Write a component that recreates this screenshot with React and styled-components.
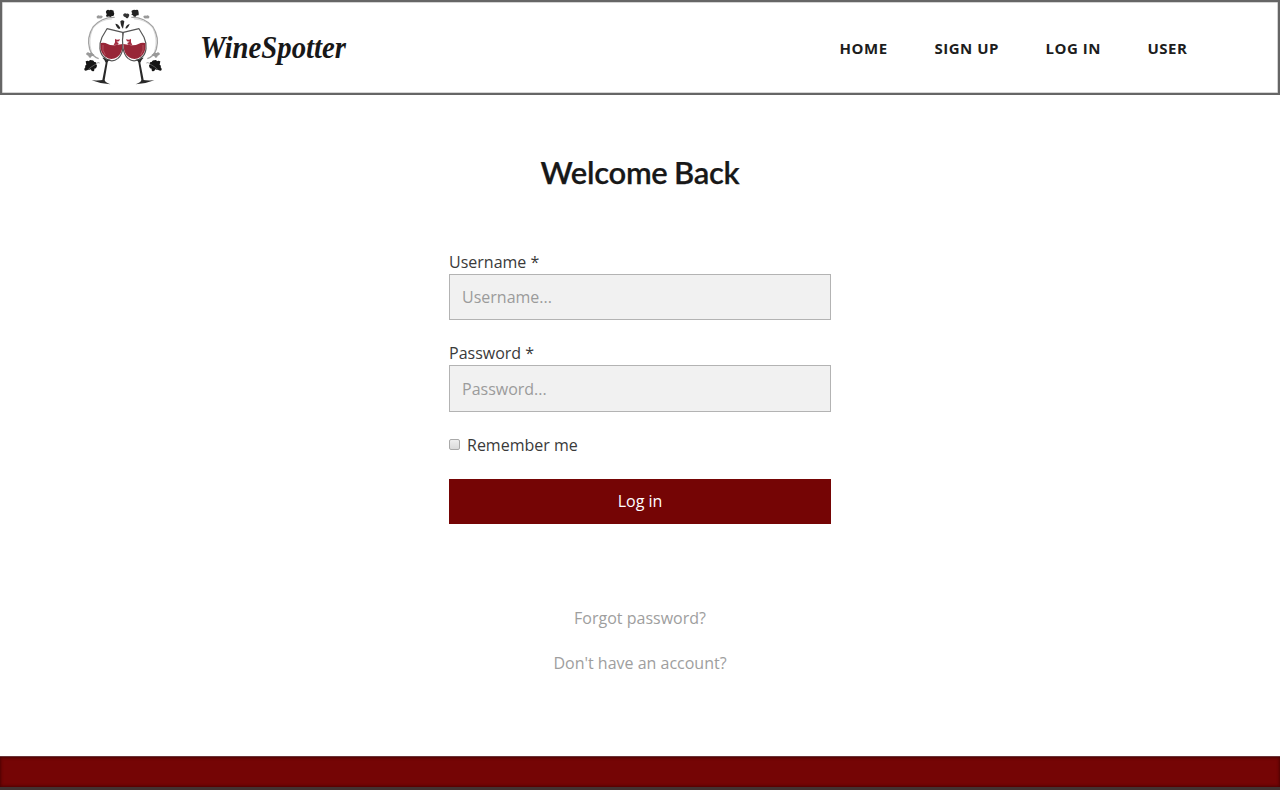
import React from "react";
import styled, { createGlobalStyle } from "styled-components";

const GlobalStyle = createGlobalStyle`
  * { box-sizing: border-box; }
  body {
    margin: 0;
    background: #fff;
    color: #3a3a3a;
    font-family: "Open Sans", sans-serif;
    font-size: 16px;
    overflow: hidden;
  }
`;

const Page = styled.div`
  display: flex;
  flex-direction: column;
  height: 790px;
`;

const Header = styled.header`
  display: flex;
  align-items: center;
  flex: none;
  height: 95px;
  padding: 0 89.5px 0 82px;
  border: 2px solid #666;
  box-shadow: inset 0 0 0 0.5px #aaa;
`;

const LogoMark = styled.svg`
  width: 78px;
  height: 78px;
  margin-top: -2px;
`;

const Brand = styled.svg`
  width: 160px;
  height: 60px;
  margin-left: 33px;
  overflow: visible;
  fill: #181818;
  font: italic bold 32px "Liberation Serif", serif;
`;

const Nav = styled.nav`
  display: flex;
  gap: 46px;
  margin: 1px 0 0 auto;
`;

const NavLink = styled.a`
  width: ${(p) => p.$width}px;
  color: #1d1d1d;
  font-size: 15px;
  font-weight: 700;
  line-height: 24px;
  letter-spacing: ${(p) => p.$tracking}px;
  white-space: nowrap;
`;

const Main = styled.main`
  display: flex;
  flex: 1;
  flex-direction: column;
  align-items: center;
`;

const Title = styled.h1`
  margin: 57px 0 0;
  color: #181818;
  font: 600 31px/40px Lato, sans-serif;
  letter-spacing: -0.3px;
  word-spacing: -1px;
  -webkit-text-stroke: 0.25px #181818;
`;

const Form = styled.form`
  display: flex;
  flex-direction: column;
  width: 382px;
  margin-top: 58px;
`;

const Field = styled.label`
  display: flex;
  flex-direction: column;
  height: ${(p) => p.$height}px;
  font-size: 16px;
  line-height: 24px;
`;

const Input = styled.input`
  width: 100%;
  height: ${(p) => p.$height}px;
  padding: 0 12px;
  border: 1px solid #b3b3b3;
  border-radius: 0;
  outline: 0;
  background: #f1f1f1;
  font: 16px "Open Sans", sans-serif;
  &::placeholder { color: #9b9b9b; opacity: 1; }
`;

const Remember = styled.label`
  display: flex;
  align-items: center;
  gap: 7px;
  height: 24px;
  font-size: 16px;
`;

const Checkbox = styled.input`
  appearance: none;
  width: 11px;
  height: 11px;
  margin: -2px 0 0;
  border: 1px solid #a9a9a9;
  border-radius: 2px;
  background: linear-gradient(#eee, #dadada);
`;

const Submit = styled.button`
  height: 45px;
  margin-top: 22px;
  padding: 0;
  border: 0;
  background: #750505;
  color: #fff;
  font: 16px/45px "Open Sans", sans-serif;
`;

const Links = styled.div`
  display: flex;
  flex-direction: column;
  align-items: center;
  gap: 21px;
  margin-top: 82px;
`;

const HelpLink = styled.a`
  color: #9e9e9e;
  font-size: 16px;
  line-height: 24px;
`;

const Footer = styled.footer`
  flex: none;
  height: 34px;
  border-top: 1px solid #6b3438;
  border-bottom: 3px solid #433332;
  background: #750505;
  box-shadow: inset 0 0 3px 1px #4d0202;
`;

function Glass() {
  return (
    <g>
      <path d="M96 83 L143 94 C149 126 145 158 129 172 Q111 187 92 172 C70 158 72 129 81 109Z" fill="#fff" stroke="#555" strokeWidth="3.5" strokeLinejoin="round" />
      <path d="M77 126 Q88 123 98 129 T124 132 L143 129 Q143 157 126 169 Q108 180 91 167 Q74 156 77 126Z" fill="#972637" />
      <path d="M84 132 Q80 148 91 162" fill="none" stroke="#bd5c69" strokeWidth="2.5" />
      <path d="M120 113q4 5 15 2l-3 6-8 1 7 4-2 5-13 1 4-8Z" fill="#a42c40" />
      <path d="M82 170 Q91 178 92 185 L82 237 Q75 239 50 238 Q77 249 106 250 Q90 244 89 237 L98 184 Q99 178 108 175 Q95 178 87 170Z" fill="#292929" />
    </g>
  );
}

function Vine() {
  return (
    <g>
      <path d="M119 49 Q80 48 55 77 Q34 110 44 144 Q51 166 71 173" fill="none" stroke="#a2a2a2" strokeWidth="4" />
      <path d="M111 54 Q74 55 53 83 Q39 119 49 151" fill="none" stroke="#c8c8c8" strokeWidth="2" />
      <path d="M65 46 q6-5 9-2 q10-2 9 4 q-3 6-11 4 q-8 3-7-6Z" fill="#999" />
      <path d="M34 157 q5-6 9-1 q10-3 9 2 q9 2 4 6 q-8 0-9 6 q-6 2-7-6 q-8-1-6-7Z" fill="#999" />
      <path d="M32 181 q7-3 10 0 q2-6 8-3 q6-1 8 5 q8-1 5 6 q5 5 2 9 q-1 5-7 5 q1 8-5 8 q-5-1-6-6 q-5 3-10 2 q-5 5-9 0 q-1-4 3-8 q-3-6 3-8Z" fill="#151515" />
      <path d="M38 207q10-10 27-19q3-6 9-2" fill="none" stroke="#777" strokeWidth="2" />
    </g>
  );
}

function Logo() {
  return (
    <LogoMark viewBox="27 21 234 234" aria-hidden="true">
      <Vine />
      <g transform="translate(288 0) scale(-1 1)"><Vine /></g>
      <path d="M94 29q5-5 9-1 6-4 8 0 7-1 5 5 3 5 1 8 0 5-6 4-6 5-9 1-7 4-9-2 4-3 1-7-3-5 0-8Z" fill="#191919" />
      <path d="M170 29q7-5 11-2 9-3 9 3 2 7 1 13-7-1-9 4-7 2-8-4-8-1-2-6-4-4-2-8Z" fill="#222" />
      <path d="M145 40q5-6 9-2 8-2 9 4-1 5-4 9-5 3-8-3-8-1-6-8Z" fill="#333" />
      <path d="M121 68q9 0 15 13l-3 3q-8-3-12-16ZM136 61q6-6 12 0l-4 22q-6-4-8-22ZM164 69q-9 1-13 13 7 3 13-13Z" fill="#292929" />
      <Glass />
      <g transform="translate(288 0) scale(-1 1)"><Glass /></g>
    </LogoMark>
  );
}

export default function App() {
  return (
    <Page>
      <GlobalStyle />
      <Header>
        <Logo />
        <Brand viewBox="0 0 160 60">
          <text x="5" y="40" textLength="146" lengthAdjust="spacingAndGlyphs">WineSpotter</text>
        </Brand>
        <Nav>
          <NavLink $width={49} $tracking={0.6}>HOME</NavLink>
          <NavLink $width={65} $tracking={0.5}>SIGN UP</NavLink>
          <NavLink $width={56} $tracking={0.5}>LOG IN</NavLink>
          <NavLink $width={41} $tracking={0.5}>USER</NavLink>
        </Nav>
      </Header>
      <Main>
        <Title>Welcome Back</Title>
        <Form onSubmit={(e) => e.preventDefault()}>
          <Field $height={91}>
            Username *
            <Input $height={46} placeholder="Username..." />
          </Field>
          <Field $height={92}>
            Password *
            <Input $height={47} type="password" placeholder="Password..." />
          </Field>
          <Remember>
            <Checkbox type="checkbox" />
            Remember me
          </Remember>
          <Submit>Log in</Submit>
        </Form>
        <Links>
          <HelpLink>Forgot password?</HelpLink>
          <HelpLink>Don't have an account?</HelpLink>
        </Links>
      </Main>
      <Footer />
    </Page>
  );
}
